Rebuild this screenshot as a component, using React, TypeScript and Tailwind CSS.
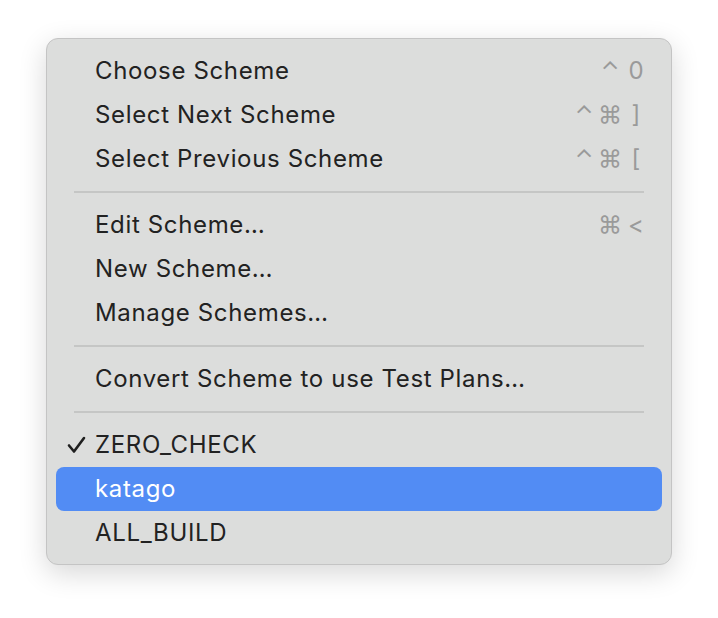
import React from "react";

type Item = {
  label: string;
  mods?: string[];
  keyChar?: string;
  checked?: boolean;
  active?: boolean;
};

const groups: Item[][] = [
  [
    { label: "Choose Scheme", mods: ["⌃"], keyChar: "0" },
    { label: "Select Next Scheme", mods: ["⌃", "⌘"], keyChar: "]" },
    { label: "Select Previous Scheme", mods: ["⌃", "⌘"], keyChar: "[" },
  ],
  [
    { label: "Edit Scheme…", mods: ["⌘"], keyChar: "<" },
    { label: "New Scheme…" },
    { label: "Manage Schemes…" },
  ],
  [{ label: "Convert Scheme to use Test Plans…" }],
  [
    { label: "ZERO_CHECK", checked: true },
    { label: "katago", active: true },
    { label: "ALL_BUILD" },
  ],
];

function Check() {
  return (
    <svg width="19" height="18" viewBox="0 0 19 18" className="absolute left-[11px] top-[13px]">
      <path d="M2 9.5 L7 15.5 L17 2" fill="none" stroke="#1f1f1f" strokeWidth="2.6" strokeLinecap="round" strokeLinejoin="round" />
    </svg>
  );
}

function Row({ item }: { item: Item }) {
  return (
    <div
      className={`relative flex h-[44px] items-center rounded-[8px] pl-[39px] pr-[13px] ${
        item.active ? "bg-[#528cf4] text-white" : "text-[#222222]"
      }`}
    >
      {item.checked && <Check />}
      <span className="flex-1 tracking-[0.65px]">{item.label}</span>
      {item.keyChar && (
        <span className="flex text-[#9a9a9a]">
          {item.mods?.map((m, i) => (
            <span key={i} className="w-[26px] text-center">{m}</span>
          ))}
          <span className="w-[26px] text-center">{item.keyChar}</span>
        </span>
      )}
    </div>
  );
}

export default function App() {
  return (
    <div className="min-h-screen bg-white pl-[46px] pt-[38px]" style={{ fontFamily: "Inter, 'Noto Sans', sans-serif" }}>
      <div className="w-[626px] rounded-[12px] border border-[#c4c4c4] bg-[#dcdddc] px-[9px] pb-[9px] pt-[10px] text-[24px] leading-none shadow-[0_8px_28px_rgba(0,0,0,0.16)]">
        {groups.map((g, gi) => (
          <div key={gi}>
            {gi > 0 && (
              <div className="flex h-[22px] items-center px-[18px]">
                <div className="h-[2px] w-full bg-[#c5c6c5]" />
              </div>
            )}
            {g.map((it) => (
              <Row key={it.label} item={it} />
            ))}
          </div>
        ))}
      </div>
    </div>
  );
}
